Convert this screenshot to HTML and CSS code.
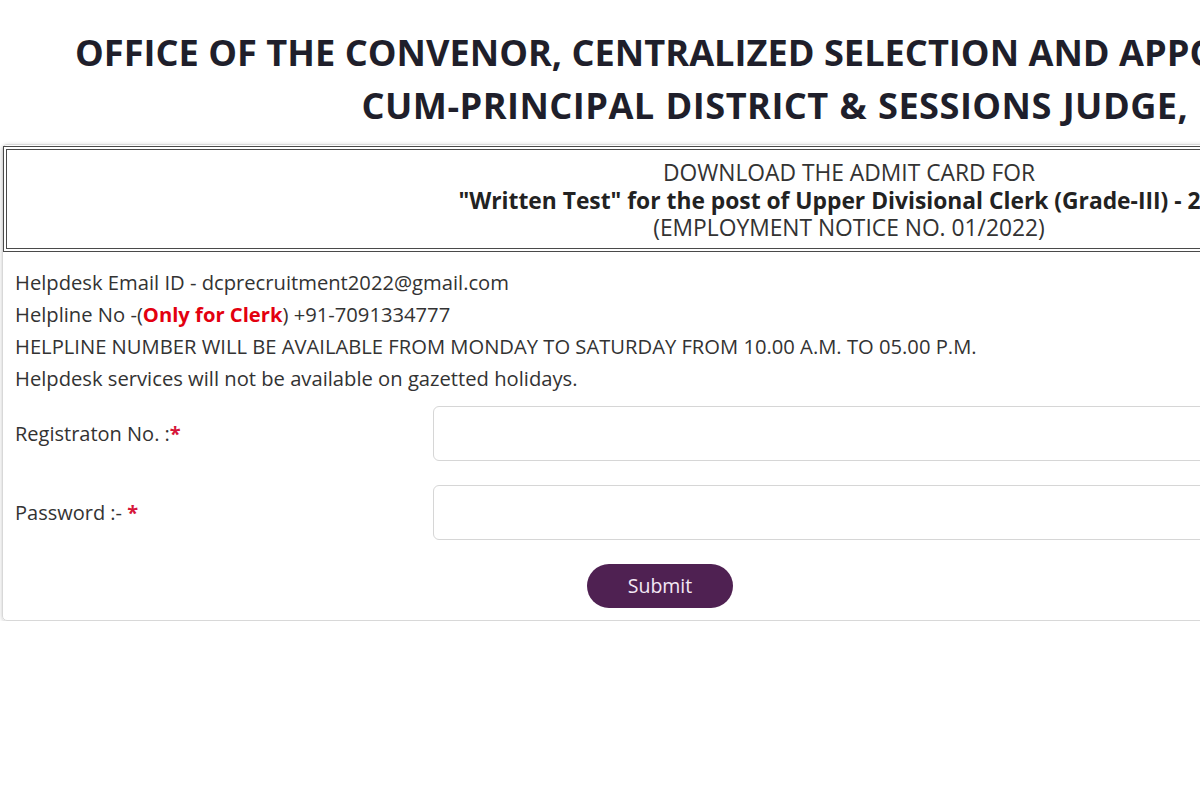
FILE: index.html
```html
<!DOCTYPE html>
<html lang="en">
<head>
<meta charset="utf-8">
<title>Admit Card Download</title>
<link rel="stylesheet" href="styles.css">
</head>
<body>
<div class="page">
  <h1 class="title">
    <span class="title-line">OFFICE OF THE CONVENOR, CENTRALIZED SELECTION AND APPOINTMENT COMMITTEE-</span>
    <span class="title-line title-line-2">CUM-PRINCIPAL DISTRICT &amp; SESSIONS JUDGE, GUMLA</span>
  </h1>
  <div class="card">
    <div class="notice">
      <div class="notice-line">DOWNLOAD THE ADMIT CARD FOR</div>
      <div class="notice-line notice-bold">"Written Test" for the post of Upper Divisional Clerk (Grade-III) - 2022</div>
      <div class="notice-line">(EMPLOYMENT NOTICE NO. 01/2022)</div>
    </div>
    <div class="info">
      <p class="info-line">Helpdesk Email ID - dcprecruitment2022@gmail.com</p>
      <p class="info-line">Helpline No -(<span class="red-bold">Only for Clerk</span>) +91-7091334777</p>
      <p class="info-line">HELPLINE NUMBER WILL BE AVAILABLE FROM MONDAY TO SATURDAY FROM 10.00 A.M. TO 05.00 P.M.</p>
      <p class="info-line">Helpdesk services will not be available on gazetted holidays.</p>
    </div>
    <form class="form">
      <div class="form-row">
        <label class="label" for="reg">Registraton No. :<span class="req">*</span></label>
        <input class="input" id="reg" type="text">
      </div>
      <div class="form-row">
        <label class="label" for="pwd">Password :- <span class="req">*</span></label>
        <input class="input" id="pwd" type="password">
      </div>
      <div class="actions">
        <button class="btn" type="button">Submit</button>
      </div>
    </form>
  </div>
</div>
</body>
</html>
```

FILE: styles.css
```css
html, body {
  margin: 0;
  padding: 0;
  background: #ffffff;
  overflow: hidden;
}

.page {
  width: 1696px;
  font-family: "Open Sans", "Noto Sans", sans-serif;
  color: #333333;
}

.title {
  margin: 26px 0 0 0;
  font-family: "Open Sans", sans-serif;
  font-weight: 700;
  font-size: 36.2px;
  line-height: 53px;
  color: #1f1f2b;
  text-align: center;
}

.title-line {
  display: block;
  white-space: nowrap;
}

.title-line-2 {
  letter-spacing: 0.45px;
  word-spacing: 1px;
}

.card {
  margin: 12px 0 0 2px;
  border: 1px solid #d8d8d8;
  border-radius: 5px;
  box-shadow: 0 1px 4px rgba(0, 0, 0, 0.22);
  padding: 1px 0 12px 0;
}

.notice {
  border: 4px double #4a4a4a;
  padding: 9px 0 6px 0;
  text-align: center;
  font-size: 22.8px;
  line-height: 27.5px;
  color: #333;
}

.notice-line {
  white-space: nowrap;
}

.notice-bold {
  font-weight: 700;
  color: #222;
}

.info {
  padding: 14px 0 0 12px;
}

.info-line {
  margin: 0;
  font-size: 20.2px;
  line-height: 32.3px;
  color: #333;
  white-space: nowrap;
}

.red-bold {
  color: #e3000f;
  font-weight: 700;
}

.form {
  padding: 11px 0 0 12px;
}

.form-row {
  display: grid;
  grid-template-columns: 418px 1fr;
  align-items: center;
  margin-bottom: 24px;
}

.label {
  font-size: 20px;
  color: #333;
}

.req {
  color: #d6163a;
  font-weight: 700;
}

.input {
  height: 55px;
  box-sizing: border-box;
  border: 1px solid #d6d6d6;
  border-radius: 6px;
  background: #fff;
  margin-right: 12px;
}

.actions {
  display: flex;
  padding-left: 572px;
}

.btn {
  width: 146px;
  height: 44px;
  border: none;
  border-radius: 22px;
  background: #4f2152;
  color: #f3e8f5;
  font-family: "Open Sans", sans-serif;
  font-size: 19.5px;
}
```
